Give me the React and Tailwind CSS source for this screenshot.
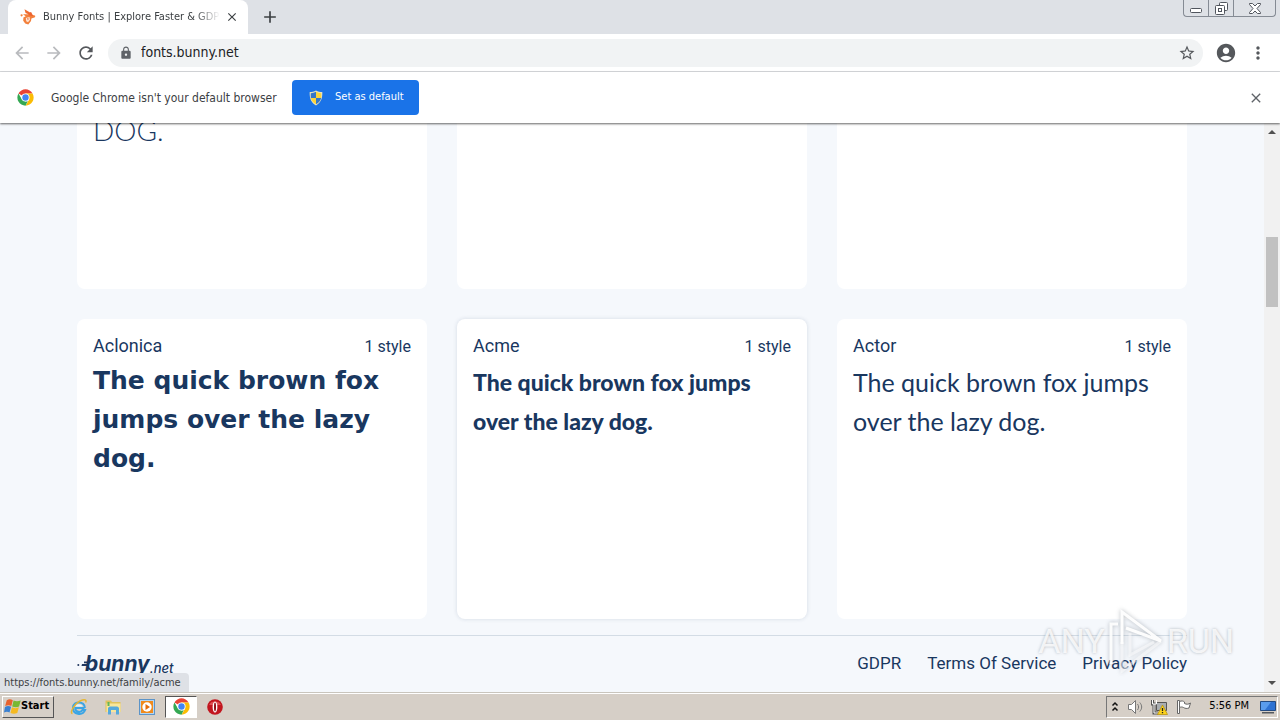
import React from "react";
import {
  MdArrowBack,
  MdArrowForward,
  MdRefresh,
  MdLock,
  MdStarBorder,
  MdAccountCircle,
  MdMoreVert,
  MdClose,
  MdAdd,
} from "react-icons/md";

const UI = "font-['DejaVu_Sans_Condensed','DejaVu_Sans',sans-serif]";

function BunnyIcon() {
  return (
    <svg viewBox="0 0 16 16" className="h-4 w-4 shrink-0" aria-hidden="true">
      <path d="M4.500.3 9.700 3.200 9 5.500 5.600 4.100Z" fill="#ee6a30" />
      <path d="M3 5.200h6.500l5.400 1.200c.7.500.3 1.700-.5 2.200l-3 .9-.4 2.400-2.700 3.600-3.100-1.100-2-2.700.2-3.200 2.300-1.200Z" fill="#f3803c" />
      <path d="m8.500 3.800 2.600-.9 1.300 2.700 1 1.600-5-1Z" fill="#ed6430" />
      <path d="M5.800 9 9.500 8l.5 2.700-2 2.500-1.800-1Z" fill="#fde3d2" />
      <circle cx="1.600" cy="6.300" r="1.100" fill="#f3803c" />
      <path d="m7 9.300 1.700.2-.7 1.700Z" fill="#e65b2b" />
    </svg>
  );
}

function ChromeIcon() {
  return (
    <svg viewBox="0 0 48 48" className="h-[17px] w-[17px] shrink-0" aria-hidden="true">
      <path d="M24 24 4.100 12.500A23 23 0 0 1 43.900 12.500H24Z" fill="#ea4335" />
      <path d="M43.900 12.500A23 23 0 0 1 24 47L34 29.700 24 12.500Z" fill="#fbbc05" />
      <path d="M24 47A23 23 0 0 1 4.100 12.500L14 29.700l10 5.800 6.400-1.500Z" fill="#34a853" />
      <circle cx="24" cy="24" r="11.500" fill="#fff" />
      <circle cx="24" cy="24" r="9" fill="#4285f4" />
    </svg>
  );
}

function ShieldIcon() {
  return (
    <svg viewBox="0 0 16 16" className="h-4 w-4 shrink-0" aria-hidden="true">
      <path d="M8 .5c2 1.200 4 1.600 6.300 1.600.3 6.300-1.300 10.600-6.300 13.400C3 12.700 1.400 8.400 1.700 2.100 4 2.100 6 1.700 8 .5Z" fill="#e8e3c0" />
      <path d="M8 1.800V8H2.900C2.700 6.300 2.700 4.700 2.800 3.200 4.800 3.100 6.400 2.700 8 1.800Z" fill="#3577c8" />
      <path d="M8 1.800V8h5.100c.2-1.700.2-3.300.1-4.800C11.200 3.100 9.600 2.700 8 1.800Z" fill="#fcd53a" />
      <path d="M8 8v6.200C5.100 12.700 3.400 10.700 2.900 8Z" fill="#fcd53a" />
      <path d="M8 8v6.200c2.900-1.500 4.600-3.500 5.100-6.200Z" fill="#3577c8" />
    </svg>
  );
}

function WindowControls() {
  const edge = "flex h-[17px] items-center justify-center border-b border-l border-[#858b94]";
  return (
    <div className="flex self-start pr-1">
      <button aria-label="Minimize" className={`${edge} w-[25px] rounded-bl`}>
        <svg viewBox="0 0 12 5" className="mt-1 h-[5px] w-3" fill="#fff" stroke="#50555d">
          <rect x=".5" y=".5" width="11" height="4" rx="1" />
        </svg>
      </button>
      <button aria-label="Restore" className={`${edge} w-[25px]`}>
        <svg viewBox="0 0 13 13" className="h-[13px] w-[13px]" fill="#fff" stroke="#50555d">
          <rect x="4.500" y=".5" width="8" height="8" rx="1" />
          <rect x=".5" y="3.500" width="9" height="9" rx="1" />
          <rect x="3.500" y="6.500" width="3" height="3" />
        </svg>
      </button>
      <button aria-label="Close window" className={`${edge} w-[43px] rounded-br border-r`}>
        <svg viewBox="0 0 12 11" className="h-[11px] w-3" fill="#fff" stroke="#50555d">
          <path d="M.5.5h3L6 3 8.500.5h3v1L8 5.500l3.500 4v1h-3L6 8l-2.500 2.500h-3v-1L4 5.500.5 1.500Z" />
        </svg>
      </button>
    </div>
  );
}

function TabStrip() {
  return (
    <header className="flex h-[34px] shrink-0 items-stretch bg-[#dee1e6] pl-2">
      <div className="flex w-60 items-center rounded-t-lg bg-white pl-3 pr-2">
        <BunnyIcon />
        <span className="ml-[7px] min-w-0 flex-1 overflow-hidden whitespace-nowrap text-[11px] text-[#3c4043] [mask-image:linear-gradient(to_right,black_86%,transparent)]">
          Bunny Fonts | Explore Faster &amp; GDPR
        </span>
        <button aria-label="Close tab" className="ml-1 flex h-4 w-4 items-center justify-center text-[#3c4043]">
          <MdClose className="h-[14px] w-[14px]" />
        </button>
      </div>
      <button aria-label="New tab" className="ml-3 text-[#3c4043]">
        <MdAdd className="h-5 w-5" />
      </button>
      <div className="flex-1" />
      <WindowControls />
    </header>
  );
}

function Toolbar() {
  return (
    <nav aria-label="Browser toolbar" className="flex h-[38px] shrink-0 items-center border-b border-[#d9dbde] bg-white px-3">
      <button aria-label="Back" className="text-[#b9bbbe]">
        <MdArrowBack className="h-5 w-5" />
      </button>
      <button aria-label="Forward" className="ml-3 text-[#b9bbbe]">
        <MdArrowForward className="h-5 w-5" />
      </button>
      <button aria-label="Reload" className="ml-3 text-[#55585c]">
        <MdRefresh className="h-5 w-5" />
      </button>
      <div className="ml-3 flex h-7 flex-1 items-center rounded-full bg-[#f1f3f4] px-[11px]">
        <MdLock className="h-[14px] w-[14px] shrink-0 text-[#5f6368]" />
        <input
          aria-label="Address"
          defaultValue="fonts.bunny.net"
          className="ml-2 min-w-0 flex-1 bg-transparent text-[14px] text-[#202124] outline-none"
        />
        <button aria-label="Bookmark this page" className="-mr-1 text-[#55585c]">
          <MdStarBorder className="h-[18px] w-[18px]" />
        </button>
      </div>
      <button aria-label="Profile" className="ml-3 text-[#55585c]">
        <MdAccountCircle className="h-[22px] w-[22px]" />
      </button>
      <button aria-label="Browser menu" className="ml-[11px] text-[#55585c]">
        <MdMoreVert className="h-5 w-5" />
      </button>
    </nav>
  );
}

function InfoBar() {
  return (
    <div className="relative z-10 flex h-[51px] shrink-0 items-center bg-white pl-[17px] pr-4 shadow-[0_1px_2px_rgba(0,0,0,0.6)]">
      <ChromeIcon />
      <p className="ml-[17px] w-[229px] whitespace-nowrap text-[12px] text-[#3c4043]">Google Chrome isn't your default browser</p>
      <button className="ml-3 flex h-[35px] w-[127px] items-center rounded bg-[#1a73e8] pl-4 text-[11px] text-white">
        <ShieldIcon />
        <span className="ml-[11px] whitespace-nowrap">Set as default</span>
      </button>
      <div className="flex-1" />
      <button aria-label="Dismiss" className="text-[#5f6368]">
        <MdClose className="h-4 w-4" />
      </button>
    </div>
  );
}

const fonts = [
  { name: "Aclonica", sample: "pt-px font-['DejaVu_Sans',sans-serif] text-[25px] font-bold" },
  { name: "Acme", sample: "pt-[3px] font-['Lato',sans-serif] text-[23px] font-black", active: true },
  { name: "Actor", sample: "pt-[3px] font-['Lato',sans-serif] text-[25px] font-normal" },
];

function FontCard({ name, sample, active }) {
  return (
    <article className={`h-[300px] rounded-lg bg-white px-4 pt-[11px] ${active ? "shadow-[0_0_4px_rgba(25,55,95,0.15)]" : ""}`}>
      <div className="flex h-[30px] items-center justify-between">
        <h2 className="text-[18px]">{name}</h2>
        <span className="pt-1 text-[16px]">1 style</span>
      </div>
      <p className={`leading-[39px] ${sample}`}>The quick brown fox jumps over the lazy dog.</p>
    </article>
  );
}

function BunnyLogo() {
  return (
    <a href="#home" aria-label="bunny.net" className="flex items-center">
      <svg viewBox="0 0 12 14" className="-mr-1 h-[14px] w-3" aria-hidden="true" fill="#22385f">
        <circle cx="1.300" cy="8" r="1" />
        <path d="M4.500 9 5 7H12L11.500 9ZM7 4.500h5l-.5 1.800H7Z" />
      </svg>
      <span className="font-['Inter',sans-serif] text-[21px] font-bold italic leading-5">bunny</span>
      <span className="pt-2 font-['Inter',sans-serif] text-[13px] font-medium italic leading-5">.net</span>
    </a>
  );
}

function Page() {
  return (
    <main className="flex min-w-0 flex-1 flex-col overflow-hidden bg-[#f5f8fc] font-['Roboto',sans-serif] text-[#19375f]">
      <div className="mx-auto w-full max-w-[1110px]">
        <div className="grid grid-cols-3 gap-[30px]">
          <div className="h-[166px] rounded-b-lg bg-white px-4">
            <p className="-mt-3 font-['Lato',sans-serif] text-[28px] font-light leading-[39px]">DOG.</p>
          </div>
          <div className="rounded-b-lg bg-white" />
          <div className="rounded-b-lg bg-white" />
        </div>
        <div className="mt-[30px] grid grid-cols-3 gap-[30px]">
          {fonts.map((f) => (
            <FontCard key={f.name} {...f} />
          ))}
        </div>
        <footer className="mt-4 flex h-14 items-center justify-between border-t border-[#d3dce5]">
          <BunnyLogo />
          <div className="flex gap-[26px] text-[17px]">
            <a href="#gdpr">GDPR</a>
            <a href="#terms">Terms Of Service</a>
            <a href="#privacy">Privacy Policy</a>
          </div>
        </footer>
      </div>
    </main>
  );
}

function ScrollBar() {
  return (
    <div className="flex w-4 shrink-0 flex-col items-center bg-[#f1f1f1]" aria-hidden="true">
      <svg viewBox="0 0 16 17" className="h-[17px] w-4" fill="#505050">
        <path d="m8 7 4 4H4Z" />
      </svg>
      <div className="mt-[97px] h-[70px] w-3 bg-[#c1c1c1]" />
      <div className="flex-1" />
      <svg viewBox="0 0 16 17" className="h-[17px] w-4" fill="#505050">
        <path d="M4 6h8l-4 4Z" />
      </svg>
    </div>
  );
}

function Watermark() {
  return (
    <div
      aria-hidden="true"
      className="pointer-events-none absolute bottom-4 right-[46px] flex items-center font-['Roboto',sans-serif] text-[34px] leading-[70px] text-white/80 [text-shadow:0_0_3px_rgba(90,100,110,0.45)]"
    >
      <span>ANY</span>
      <svg viewBox="0 0 62 70" className="h-[70px] w-[62px] drop-shadow-[0_0_2px_rgba(90,100,110,0.45)]" fill="none">
        <path d="M6 58V18h7" stroke="rgba(255,255,255,0.9)" strokeWidth="3" />
        <path d="M17 38V6l39 29-35-13" stroke="rgba(255,255,255,0.95)" strokeWidth="3" />
        <path d="M17 36v29l39-30M25 27v22l24-13" stroke="rgba(255,255,255,0.5)" strokeWidth="3" />
      </svg>
      <span>RUN</span>
    </div>
  );
}

function StartFlag() {
  return (
    <svg viewBox="0 0 16 16" className="h-[17px] w-[17px]" aria-hidden="true">
      <path d="M2.600 2.200c2-1.500 4-1 5.700-.2L6.900 7.500C5.200 6.500 3.200 6.500 1.100 7.600Z" fill="#e8622d" />
      <path d="M9 2.400c2 1 4.300 1 6.700 0l-1.500 5.500c-1.900 1-4.400 1-6.500 0Z" fill="#78b833" />
      <path d="M.9 8.400c2-1 4-1 5.800-.1l-1.500 5.300c-1.600-1-3.500-1-5.200.1Z" fill="#3b80d0" />
      <path d="M7.500 8.800c2 1 4.200 1 6.500 0l-1.500 5.300c-2 1-4.400 1-6.400 0Z" fill="#f5b921" />
    </svg>
  );
}

function IeIcon() {
  return (
    <svg viewBox="0 0 18 18" className="h-[18px] w-[18px]" fill="none" aria-hidden="true">
      <path d="M14.500 10H5.300c0 4.500 5.700 5 7.200 2h2.600C12.500 18.500 2.500 16.500 3 9.500 3.300 2.700 15 2.500 14.800 10" stroke="#3aa5e5" strokeWidth="2" />
      <path d="M5.500 8.500c.8-3 6.200-3 6.700 0Z" fill="#e4f4fc" />
      <path d="M2.500 15.500C-1 15 5 4 12.500 2c3-.8 4.200.3 3.200 2.500" stroke="#e5b632" strokeWidth="1.500" />
    </svg>
  );
}

function FolderIcon() {
  return (
    <svg viewBox="0 0 18 18" className="h-[18px] w-[18px]" aria-hidden="true">
      <path d="M1.500 2.500h5.500l1 1.500h8.500V14h-15Z" fill="#dfc25c" />
      <path d="M2.500 5.500h14V14h-14Z" fill="#f8e69a" />
      <path d="M4 16.500v-6c0-1 1-2 2-2h7c1 0 2 1 2 2v6h-3v-4.500H7v4.500Z" fill="#55a9dc" />
      <path d="M3.500 4h2v4h-2Z" fill="#62b657" />
    </svg>
  );
}

function PlayerIcon() {
  return (
    <svg viewBox="0 0 18 18" className="h-[18px] w-[18px]" aria-hidden="true">
      <rect x="1.500" y="1.500" width="15" height="15" fill="#b5d6f2" stroke="#5c94c8" />
      <rect x="3" y="3" width="12" height="12" fill="#f08a1c" />
      <circle cx="9" cy="9" r="4.700" fill="#fff" />
      <path d="m7.500 6 4.500 3-4.500 3Z" fill="#e46c0a" />
    </svg>
  );
}

function OperaIcon() {
  return (
    <svg viewBox="0 0 18 18" className="h-[18px] w-[18px]" aria-hidden="true">
      <circle cx="9" cy="9" r="7.800" fill="#c2161f" />
      <path d="M3 7a6.500 5.500 0 0 1 12 0" fill="#df5054" />
      <ellipse cx="9" cy="9" rx="2.400" ry="5.500" fill="#fff" />
      <ellipse cx="9" cy="9" rx="1" ry="4.400" fill="#8e0d15" />
    </svg>
  );
}

function TrayIcons() {
  return (
    <>
      <svg viewBox="0 0 8 12" className="h-3 w-2" fill="none" stroke="#111" strokeWidth="1.500" aria-hidden="true">
        <path d="m1.500 4.500 2.500-2.500 2.500 2.500M1.500 9.500l2.500-2.500 2.500 2.500" />
      </svg>
      <svg viewBox="0 0 18 16" className="ml-2 h-4 w-[18px]" fill="#fff" stroke="#777" aria-hidden="true">
        <path d="M1.500 5.500h3l4-4v13l-4-4h-3Z" />
        <path d="M10.500 5c1.500 2 1.500 4 0 6M12.800 3.500c2.500 3 2.500 6 0 9" fill="none" />
      </svg>
      <svg viewBox="0 0 17 16" className="ml-[6px] h-4 w-[17px]" aria-hidden="true">
        <path d="M5.500 3.500h10v8h-10Z" fill="#a9adb1" stroke="#555" />
        <path d="M1.500 1v4h1.500v9h4" fill="none" stroke="#555" strokeWidth="3" />
        <path d="M1.500 1v4h1.500v9h4M5.500 1v4H3" fill="none" stroke="#fff" />
        <path d="m11.500 6 5 9.500h-10Z" fill="#fcd31c" stroke="#b58c00" strokeWidth=".7" />
        <path d="M11.500 9v3M11.500 13v1.300" stroke="#222" strokeWidth="1.300" />
      </svg>
      <svg viewBox="0 0 17 16" className="ml-2 h-4 w-[17px]" fill="#fff" stroke="#666" aria-hidden="true">
        <path d="M1.500 1.500h2v13h-2Z" />
        <path d="M3.500 2.500c2-1 4-.5 5 .5v1.500c2 1 4 1 6-.5l-1.500 5c-2 .8-4 .5-5.500-.5-1.500-.8-3-.5-4 0Z" />
      </svg>
    </>
  );
}

function Taskbar() {
  const item = "flex h-6 w-[34px] items-center justify-center";
  return (
    <footer className="flex h-7 shrink-0 items-center border-t border-[#c9c5bd] bg-[#d6cfc7] px-[2px] shadow-[inset_0_1px_0_#fff]">
      <button className="flex h-[22px] w-[52px] items-center border border-b-[#555] border-l-white border-r-[#555] border-t-white pl-px text-[11px] font-bold text-black">
        <StartFlag />
        <span>Start</span>
      </button>
      <div className="ml-2 flex items-center">
        <button aria-label="Internet Explorer" className={item}><IeIcon /></button>
        <button aria-label="File Explorer" className={item}><FolderIcon /></button>
        <button aria-label="Media Player" className={item}><PlayerIcon /></button>
        <button aria-label="Google Chrome" className="mx-px flex h-[22px] w-8 items-center justify-center border border-b-white border-l-[#555] border-r-white border-t-[#555] bg-white">
          <ChromeIcon />
        </button>
        <button aria-label="Opera" className={item}><OperaIcon /></button>
      </div>
      <div className="flex-1" />
      <div className="flex h-[22px] items-center border border-b-white border-l-[#777] border-r-white border-t-[#777] pl-1 pr-px">
        <TrayIcons />
        <time className="ml-4 whitespace-nowrap text-[11px] text-black">5:56 PM</time>
        <svg viewBox="0 0 16 14" className="ml-[11px] h-[14px] w-4" aria-hidden="true">
          <path d="M.5 1.500h15v9H.5Z" fill="#2e72d2" stroke="#234a80" />
          <path d="M1 2h10L5 10H1Z" fill="#5a9cec" />
          <path d="M2 12h12v1.500H2Z" fill="#54585e" />
        </svg>
      </div>
    </footer>
  );
}

export default function App() {
  return (
    <div className={`flex h-screen flex-col overflow-hidden bg-white ${UI}`}>
      <TabStrip />
      <Toolbar />
      <InfoBar />
      <div className="relative flex min-h-0 flex-1">
        <Page />
        <ScrollBar />
        <div className="absolute bottom-0 left-0 h-[19px] whitespace-nowrap rounded-tr bg-[#dee1e6] pl-1 pr-2 text-[11px] leading-[19px] text-[#3c4043]">
          https://fonts.bunny.net/family/acme
        </div>
        <Watermark />
      </div>
      <Taskbar />
    </div>
  );
}
